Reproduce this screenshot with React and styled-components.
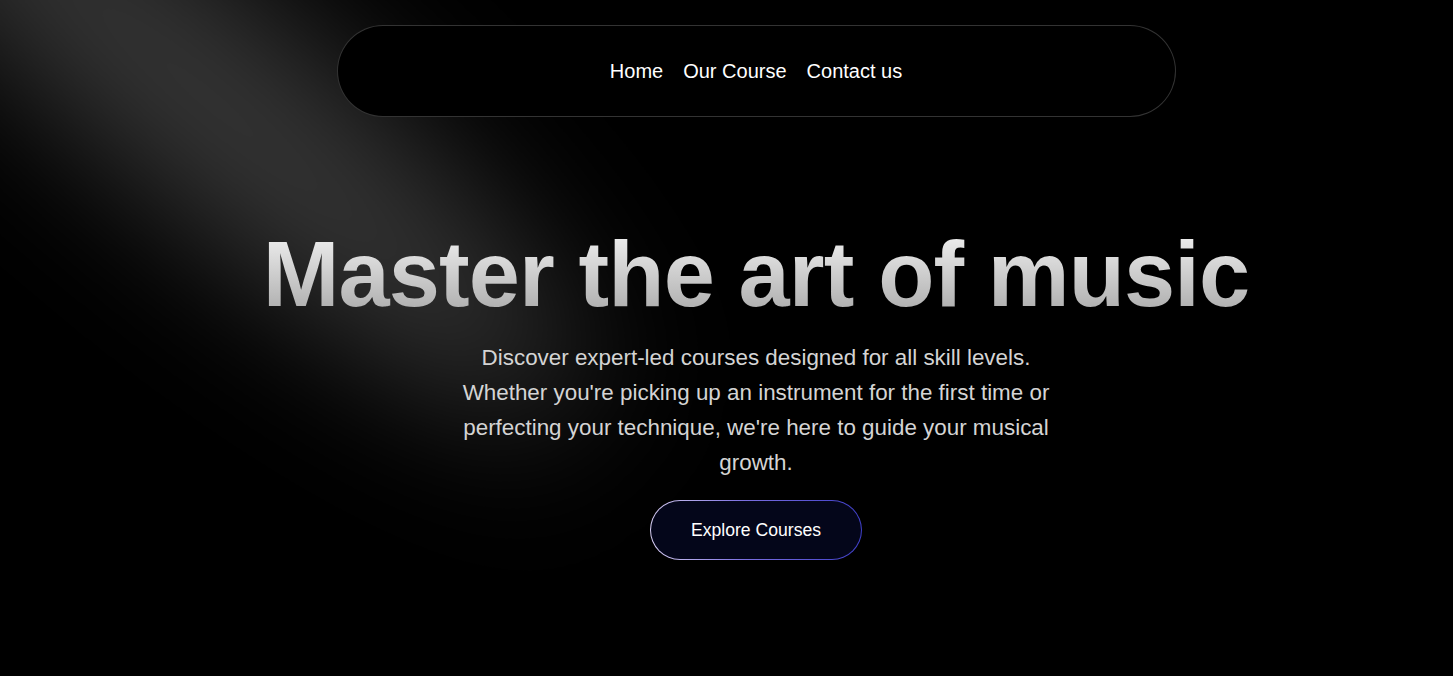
import styled, {createGlobalStyle} from "styled-components"

const GlobalStyle = createGlobalStyle`
    html, body {
        margin: 0;
        padding: 0;
        background: #000;
    }
    * {
        box-sizing: border-box;
    }
`

const Page = styled.div`
    position: relative;
    min-height: 100vh;
    overflow: hidden;
    background: #000;
    font-family: "Liberation Sans", Arial, sans-serif;
    padding: 25px 0 0 59px;
`

const Glow = styled.svg`
    position: absolute;
    inset: 0;
    width: 100%;
    height: 100%;
    pointer-events: none;
    z-index: 0;
`

const Content = styled.div`
    position: relative;
    z-index: 1;
    display: flex;
    flex-direction: column;
    align-items: center;
`

const Nav = styled.nav`
    width: 839px;
    height: 92px;
    border: 1px solid rgba(255, 255, 255, 0.2);
    border-radius: 999px;
    background: #000;
    display: flex;
    align-items: center;
    justify-content: center;
    gap: 20px;
    padding-top: 1px;
`

const NavLink = styled.a`
    color: #fff;
    font-size: 20px;
    text-decoration: none;
    cursor: pointer;
`

const Title = styled.h1`
    margin: 107px 0 0;
    font-size: 92px;
    line-height: 1.1;
    font-weight: 700;
    letter-spacing: -0.9px;
    background: linear-gradient(to bottom, #f7f7f7, #a3a3a3);
    -webkit-background-clip: text;
    background-clip: text;
    color: transparent;
    text-align: center;
`

const Lead = styled.p`
    margin: 15px 0 0;
    max-width: 600px;
    font-size: 22.4px;
    line-height: 35px;
    color: #d4d4d4;
    text-align: center;
`

const Button = styled.button`
    margin-top: 20px;
    height: 60px;
    padding: 0 40px;
    border-radius: 999px;
    border: 1px solid transparent;
    background:
        linear-gradient(#04061a, #04061a) padding-box,
        linear-gradient(to right, #d6ccf2, #7a6ee0 45%, #3f3fc8) border-box;
    color: #fff;
    font-family: inherit;
    font-size: 17.6px;
    cursor: pointer;
`

const Spotlight = () => (
    <Glow viewBox="0 0 1453 676" preserveAspectRatio="none">
        <defs>
            <filter
                id="beamBlur"
                filterUnits="userSpaceOnUse"
                x="-800"
                y="-800"
                width="3000"
                height="2400"
            >
                <feGaussianBlur stdDeviation="75" />
            </filter>
        </defs>
        <ellipse
            cx="210"
            cy="100"
            rx="480"
            ry="105"
            transform="rotate(40 210 100)"
            fill="white"
            fillOpacity="0.22"
            filter="url(#beamBlur)"
        />
    </Glow>
)

export default function App() {
    return (
        <Page>
            <GlobalStyle />
            <Spotlight />
            <Content>
                <Nav>
                    <NavLink>Home</NavLink>
                    <NavLink>Our Course</NavLink>
                    <NavLink>Contact us</NavLink>
                </Nav>
                <Title>Master the art of music</Title>
                <Lead>
                    Discover expert-led courses designed for all skill levels. Whether you're picking up an instrument for the first time or perfecting your technique, we're here to guide your musical growth.
                </Lead>
                <Button>Explore Courses</Button>
            </Content>
        </Page>
    )
}
